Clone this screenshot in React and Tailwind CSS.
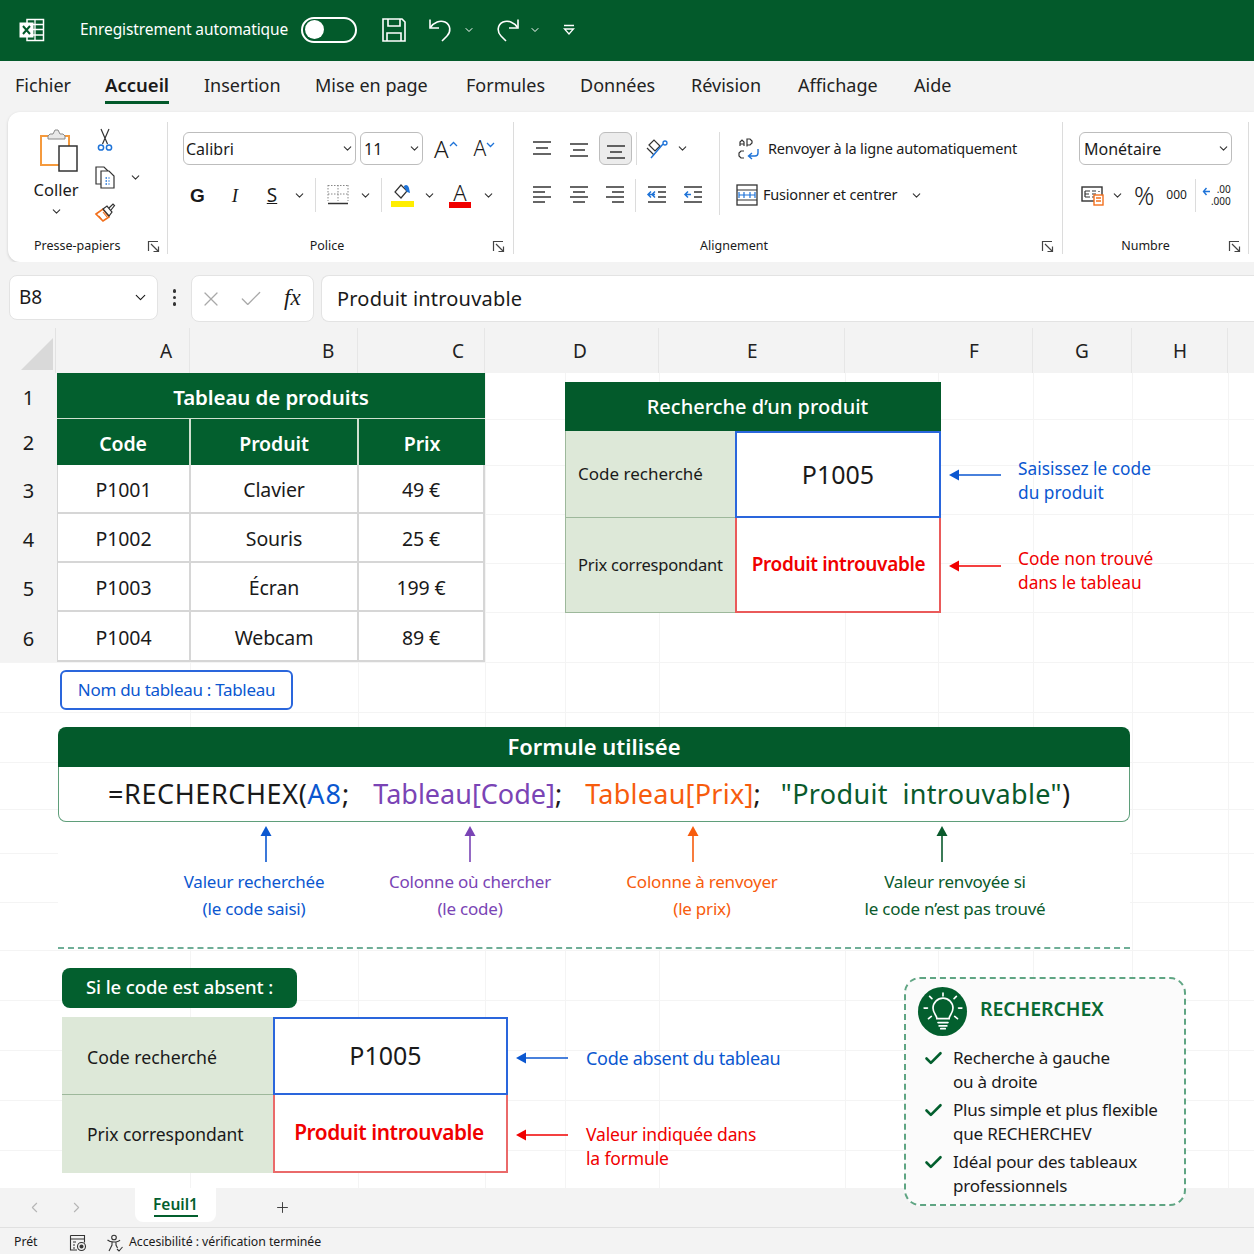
import React from "react";
import { ChevronDown, ChevronLeft, ChevronRight, Plus, X, Check } from "lucide-react";

const Chev = ({ className = "" }) => <ChevronDown size={13} strokeWidth={2} className={"text-[#333] " + className} />;

function Launcher() {
  return (
    <svg width="13" height="13" viewBox="0 0 13 13" fill="none" stroke="#444" strokeWidth="1.2">
      <path d="M1.5 11V1.5H11" />
      <path d="M4 4l7.5 7.5M11.5 6.5v5h-5" />
    </svg>
  );
}

function Lines({ rows, extra }) {
  return (
    <svg width="22" height="22" viewBox="0 0 22 22" fill="none" stroke="#333" strokeWidth="1.5">
      {rows.map((r, i) => <line key={i} x1={r[0]} x2={r[1]} y1={r[2]} y2={r[2]} />)}
      {extra}
    </svg>
  );
}

function ExcelLogo() {
  return (
    <svg width="28" height="26" viewBox="0 0 28 26" fill="none">
      <path d="M9 2.5h16.5v21H9z" stroke="#fff" strokeWidth="1.5" />
      <path d="M9 7.5h16.5M9 12.5h16.5M9 18h16.5M17 2.5v21" stroke="#fff" strokeWidth="1.3" />
      <rect x="1.5" y="5.5" width="14" height="15" fill="#fff" />
      <path d="M5 9l7 8M12 9l-7 8" stroke="#035a2b" strokeWidth="2" />
    </svg>
  );
}

function Clipboard() {
  return (
    <svg width="40" height="44" viewBox="0 0 40 44" fill="none">
      <path d="M2 7h28v29H2z" stroke="#f59a3d" strokeWidth="2" />
      <path d="M9 7l2-2h3l2-4h3l2 4h3l2 2v3H9z" fill="#e8e8e8" stroke="#888" strokeWidth="1" />
      <rect x="20" y="17" width="18" height="25" fill="#fff" stroke="#333" strokeWidth="1.5" />
    </svg>
  );
}

function ScissorsIcon() {
  return (
    <svg width="16" height="24" viewBox="0 0 16 24" fill="none">
      <path d="M4 1l6.5 15M12 1L5.5 16" stroke="#333" strokeWidth="1.2" />
      <circle cx="4" cy="19.5" r="2.6" stroke="#1e73d8" strokeWidth="1.5" />
      <circle cx="12" cy="19.5" r="2.6" stroke="#1e73d8" strokeWidth="1.5" />
    </svg>
  );
}

function CopyIcon() {
  return (
    <svg width="22" height="24" viewBox="0 0 22 24" fill="none" stroke="#333" strokeWidth="1.2">
      <path d="M8 19H2V2h8l4 4" />
      <path d="M7 6h8l5 5v12H7z" fill="#fff" />
      <path d="M11.5 13h4M11.5 16h4M11.5 19h4" stroke="#1e73d8" strokeDasharray="1.5 1.5" strokeWidth="1.5" />
    </svg>
  );
}

function BrushIcon() {
  return (
    <svg width="22" height="22" viewBox="0 0 22 22" fill="none">
      <path d="M2 13l7-5 6 8-6 4z" stroke="#f2701d" strokeWidth="1.6" />
      <path d="M5 15l3 4M9 11l4 5" stroke="#f2701d" strokeWidth="1.2" />
      <path d="M9 8l4-3 5 6-3 4z" fill="#fff" stroke="#333" strokeWidth="1.2" />
      <path d="M15 7l4-4 1.5 1.5-3.5 4.5" stroke="#333" strokeWidth="1.2" />
    </svg>
  );
}

function BordersIcon() {
  return (
    <svg width="22" height="22" viewBox="0 0 22 22" fill="none">
      <path d="M1 1.5h20M1 10h20M11 1v16M1 1v16M21 1v16" stroke="#888" strokeWidth="1" strokeDasharray="1.5 1.5" />
      <path d="M1 19.5h20" stroke="#333" strokeWidth="1.5" />
    </svg>
  );
}

function FillIcon() {
  return (
    <div className="flex flex-col items-center">
      <svg width="22" height="18" viewBox="0 0 22 18" fill="none">
        <path d="M9 2L3 9l6 6 6-7z" fill="#fff" stroke="#333" strokeWidth="1.2" />
        <path d="M12 3c2-2 4-1 5 2l1 5-3-1-3-5" fill="#1e73d8" />
      </svg>
      <div className="h-[6px] w-[23px] bg-[#ffee00]" />
    </div>
  );
}

function OrientIcon() {
  return (
    <svg width="24" height="24" viewBox="0 0 24 24" fill="none">
      <path d="M4 8l5-5 6 6-5 5zM2 11l7 7" stroke="#333" strokeWidth="1.2" />
      <path d="M6 21L18 7" stroke="#1e73d8" strokeWidth="1.4" />
      <circle cx="20" cy="6" r="2" stroke="#1e73d8" strokeWidth="1.3" />
    </svg>
  );
}

function WrapIcon() {
  return (
    <svg width="22" height="24" viewBox="0 0 22 24" fill="none">
      <path d="M3 9V5l2-2 2 2v4M3 7h4M10 1.5v8M10 2h3l2 2v2l-2 2h-3M7 14H4l-2 2v3l2 2h3" stroke="#333" strokeWidth="1.2" />
      <path d="M21 12v4a3 3 0 0 1-3 3h-6M15 16l-3.5 3 3.5 3" stroke="#1e73d8" strokeWidth="1.4" />
    </svg>
  );
}

function MergeIcon() {
  return (
    <svg width="22" height="22" viewBox="0 0 22 22" fill="none">
      <rect x="1" y="1" width="20" height="20" stroke="#333" strokeWidth="1.3" />
      <path d="M1 6h20M1 16h20" stroke="#333" strokeWidth="1.2" />
      <path d="M3 11h16M3 8v6M19 8v6M8 8v6M14 8v6" stroke="#1e73d8" strokeWidth="1.2" />
    </svg>
  );
}

function CurrencyIcon() {
  return (
    <svg width="24" height="22" viewBox="0 0 24 22" fill="none">
      <rect x="1" y="3" width="20" height="14" stroke="#333" strokeWidth="1.4" />
      <path d="M4 7h5M4 10h4M4 13h5M4 7v6M11 7h4M11 10h4M11 13h4M18 7v1" stroke="#333" strokeWidth="1.2" />
      <rect x="13" y="11" width="9" height="10" fill="#fff" stroke="#f2701d" strokeWidth="1.4" />
      <path d="M15 14h5M15 17h5" stroke="#f2701d" strokeWidth="1.3" />
    </svg>
  );
}

function LeftArrow({ color, w }) {
  return (
    <svg width={w} height="12" viewBox={`0 0 ${w} 12`} className="shrink-0">
      <path d="M0 6l10-5.5v11z" fill={color} />
      <line x1="8" y1="6" x2={w} y2="6" stroke={color} strokeWidth="1.6" />
    </svg>
  );
}

function UpArrow({ color, className = "" }) {
  return (
    <svg width="12" height="36" viewBox="0 0 12 36" className={"shrink-0 " + className}>
      <path d="M6 0l5.5 10H.5z" fill={color} />
      <line x1="6" y1="8" x2="6" y2="36" stroke={color} strokeWidth="1.6" />
    </svg>
  );
}

function Bulb() {
  return (
    <svg width="40" height="40" viewBox="0 0 36 36" fill="none" stroke="#fff" strokeWidth="1.5" strokeLinecap="round">
      <path d="M12.5 24c0-3-3.5-4.5-3.5-9.5a9 9 0 0 1 18 0c0 5-3.5 6.5-3.5 9.5z" />
      <path d="M13.5 27.5h9M14.5 30.5h7M16 33h4" />
      <path d="M18 1v2.5M6 4l2 2M30 4l-2 2M1 14.5h3M32 14.5h3M5 24l2.5-2M31 24l-2.5-2" />
    </svg>
  );
}

const gridX = [190, 358, 485, 565, 659, 845, 938, 1033, 1132, 1228];
const gridY = [46, 92, 141, 190, 239, 289, 339, 389, 436, 480, 529, 577, 627, 677, 727, 777];

const products = [
  ["3", "P1001", "Clavier", "49 €", "h-[49px]"],
  ["4", "P1002", "Souris", "25 €", "h-[49px]"],
  ["5", "P1003", "Écran", "199 €", "h-[49px]"],
  ["6", "P1004", "Webcam", "89 €", "h-[50px]"],
];

const bullets = [
  ["Recherche à gauche", "ou à droite"],
  ["Plus simple et plus flexible", "que RECHERCHEV"],
  ["Idéal pour des tableaux", "professionnels"],
];

export default function App() {
  return (
    <div className="w-[1254px] h-[1254px] overflow-hidden flex flex-col bg-white text-[#1a1a1a] font-['Noto_Sans','Open_Sans',sans-serif]">
      {/* Title bar */}
      <div className="h-[61px] shrink-0 bg-[#035a2b] flex items-center pb-[2px] text-white">
        <div className="ml-[18px] w-[28px]"><ExcelLogo /></div>
        <span className="ml-[34px] text-[15.5px] tracking-[-0.1px] w-[221px] whitespace-nowrap">Enregistrement automatique</span>
        <div className="w-[56px] h-[26px] rounded-full border-2 border-white flex items-center pl-[2px]">
          <div className="w-[19px] h-[19px] rounded-full bg-white" />
        </div>
        <svg className="ml-[24px]" width="26" height="26" viewBox="0 0 26 26" fill="none" stroke="#fff" strokeWidth="1.6">
          <path d="M2 2h19l3 3v19H2z" />
          <path d="M7 2v7h12V2M6 24v-8h14v8" />
        </svg>
        <svg className="ml-[21px]" width="26" height="26" viewBox="0 0 26 26" fill="none" stroke="#fff" strokeWidth="1.6">
          <path d="M2 2.5v8.5h9" />
          <path d="M2.5 10.5C6 5 12 3 17 5c6 3 6 10 2 14l-5 5" />
        </svg>
        <ChevronDown size={12} className="ml-[9px]" />
        <svg className="ml-[19px]" width="26" height="26" viewBox="0 0 26 26" fill="none" stroke="#fff" strokeWidth="1.6">
          <path d="M24 2.5v8.5h-9" />
          <path d="M23.5 10.5C20 5 14 3 9 5c-6 3-6 10-2 14l5 5" />
        </svg>
        <ChevronDown size={12} className="ml-[9px]" />
        <svg className="ml-[22px]" width="12" height="12" viewBox="0 0 12 12" fill="none" stroke="#fff" strokeWidth="1.3">
          <path d="M1 1.5h10M1.5 5h9L6 10z" />
        </svg>
      </div>

      {/* Tabs */}
      <div className="h-[51px] shrink-0 bg-[#f3f3f3] flex items-start pt-[11px] pl-[15px] text-[18px] leading-[26px] text-[#222]">
        <span className="w-[90px]">Fichier</span>
        <div className="w-[99px] flex flex-col items-start">
          <span className="font-semibold w-[64px] whitespace-nowrap text-[#1a1a1a] text-[18.5px]">Accueil</span>
          <div className="h-[3px] w-[64px] mt-[3px] bg-[#035a2b]" />
        </div>
        <span className="w-[111px]">Insertion</span>
        <span className="w-[151px]">Mise en page</span>
        <span className="w-[114px]">Formules</span>
        <span className="w-[111px]">Données</span>
        <span className="w-[107px]">Révision</span>
        <span className="w-[116px]">Affichage</span>
        <span>Aide</span>
      </div>

      {/* Ribbon */}
      <div className="h-[150px] shrink-0 bg-[#f3f3f3] pl-[8px]">
        <div className="h-[150px] bg-white rounded-l-xl shadow-[0_1px_3px_rgba(0,0,0,0.16)] flex pt-[10px] pb-[8px]">
          {/* Presse-papiers */}
          <div className="w-[160px] shrink-0 border-r border-[#dcdcdc] flex flex-col">
            <div className="flex h-[116px]">
              <div className="w-[70px] flex flex-col items-center pt-[7px] pl-[22px] ml-[2px]">
                <div className="ml-[5px]"><Clipboard /></div>
                <span className="text-[16.5px] leading-[22px] mt-[6px]">Coller</span>
                <Chev className="mt-[4px]" />
              </div>
              <div className="w-[25px] ml-[12px] flex flex-col items-center pt-[6px]">
                <ScissorsIcon />
                <div className="mt-[13px]"><CopyIcon /></div>
                <div className="mt-[12px]"><BrushIcon /></div>
              </div>
              <Chev className="ml-[12px] mt-[49px]" />
            </div>
            <div className="flex items-center h-[16px] pl-[26px]">
              <span className="text-[12.5px] w-[113px] whitespace-nowrap">Presse-papiers</span>
              <Launcher />
            </div>
          </div>

          {/* Police */}
          <div className="w-[346px] shrink-0 border-r border-[#dcdcdc] flex flex-col">
            <div className="h-[116px] pl-[15px] pt-[10px]">
              <div className="flex items-center h-[33px]">
                <div className="w-[173px] h-[33px] border border-[#bdbdbd] rounded-md flex items-center justify-between pl-[2px] pr-[1px] text-[16px]">
                  <span>Calibri</span><Chev />
                </div>
                <div className="w-[63px] h-[33px] ml-[4px] border border-[#bdbdbd] rounded-md flex items-center justify-between pl-[3px] pr-[1px] text-[16px]">
                  <span>11</span><Chev />
                </div>
                <span className="ml-[11px] text-[24px] leading-none font-light">A</span>
                <svg width="9" height="7" viewBox="0 0 9 7" fill="none" stroke="#1e73d8" strokeWidth="1.3" className="mb-[9px]"><path d="M1 5l3.5-3.5L8 5" /></svg>
                <span className="ml-[16px] text-[21px] leading-none font-light">A</span>
                <svg width="9" height="7" viewBox="0 0 9 7" fill="none" stroke="#1e73d8" strokeWidth="1.3" className="mb-[9px]"><path d="M1 2l3.5 3.5L8 2" /></svg>
              </div>
              <div className="flex items-center h-[34px] mt-[13px] pl-[7px]">
                <span className="w-[14px] text-[19px] font-bold font-['Liberation_Sans',sans-serif] leading-none">G</span>
                <span className="w-[14px] ml-[24px] text-[19px] italic font-light font-['Liberation_Serif',serif] text-center leading-none">I</span>
                <span className="w-[14px] ml-[23px] text-[19px] underline text-center leading-none">S</span>
                <Chev className="ml-[14px]" />
                <div className="w-px h-[34px] bg-[#dcdcdc] ml-[9px]" />
                <div className="ml-[11px]"><BordersIcon /></div>
                <Chev className="ml-[10px]" />
                <div className="w-px h-[34px] bg-[#dcdcdc] ml-[9px]" />
                <div className="ml-[9px]"><FillIcon /></div>
                <Chev className="ml-[9px]" />
                <div className="ml-[13px] flex flex-col items-center w-[22px]">
                  <span className="text-[22px] leading-[19px] font-light">A</span>
                  <div className="h-[6px] w-[22px] bg-[#f00000]" />
                </div>
                <Chev className="ml-[11px]" />
              </div>
            </div>
            <div className="flex items-center h-[16px]">
              <span className="text-[12.5px] w-[318px] text-center">Police</span>
              <span className="ml-[6px]"><Launcher /></span>
            </div>
          </div>

          {/* Alignement */}
          <div className="w-[549px] shrink-0 border-r border-[#dcdcdc] flex flex-col">
            <div className="h-[116px] flex pt-[10px]">
              <div className="flex flex-col pl-[17px] w-[205px] shrink-0">
                <div className="flex items-center h-[33px]">
                  <Lines rows={[[2, 20, 4], [5, 17, 10], [2, 20, 16]]} />
                  <div className="ml-[15px]"><Lines rows={[[2, 20, 6], [5, 17, 12], [2, 20, 18]]} /></div>
                  <div className="ml-[9px] w-[33px] h-[33px] bg-[#ececec] border border-[#bdbdbd] rounded-md flex items-center justify-center">
                    <Lines rows={[[2, 20, 8], [5, 17, 14], [2, 20, 20]]} />
                  </div>
                  <div className="w-px h-[33px] bg-[#dcdcdc] ml-[4px]" />
                  <div className="ml-[8px]"><OrientIcon /></div>
                  <Chev className="ml-[7px]" />
                </div>
                <div className="flex items-center h-[34px] mt-[13px]">
                  <Lines rows={[[2, 20, 3], [2, 14, 8], [2, 20, 13], [2, 14, 18]]} />
                  <div className="ml-[15px]"><Lines rows={[[2, 20, 3], [5, 17, 8], [2, 20, 13], [5, 17, 18]]} /></div>
                  <div className="ml-[14px]"><Lines rows={[[2, 20, 3], [8, 20, 8], [2, 20, 13], [8, 20, 18]]} /></div>
                  <div className="w-px h-[33px] bg-[#dcdcdc] ml-[9px]" />
                  <div className="ml-[10px]"><Lines rows={[[2, 20, 3], [12, 20, 8], [12, 20, 13], [2, 20, 18]]} extra={<path d="M9 10.5H2M5 7.5l-3 3 3 3M9 7.5l-3 3 3 3" stroke="#1e73d8" />} /></div>
                  <div className="ml-[14px]"><Lines rows={[[2, 20, 3], [12, 20, 8], [12, 20, 13], [2, 20, 18]]} extra={<path d="M9 10.5H3M6 7.5l-3 3 3 3" stroke="#1e73d8" />} /></div>
                </div>
              </div>
              <div className="w-px h-[83px] bg-[#dcdcdc]" />
              <div className="flex flex-col text-[14.5px] tracking-[-0.2px]">
                <div className="flex items-center h-[33px] pl-[17px]">
                  <WrapIcon />
                  <span className="ml-[9px] whitespace-nowrap">Renvoyer à la ligne automatiquement</span>
                </div>
                <div className="flex items-center h-[34px] mt-[13px] pl-[16px]">
                  <MergeIcon />
                  <span className="ml-[5px] whitespace-nowrap">Fusionner et centrer</span>
                  <Chev className="ml-[13px]" />
                </div>
              </div>
            </div>
            <div className="flex items-center h-[16px]">
              <span className="text-[12.5px] w-[441px] text-right pr-[187px] whitespace-nowrap">Alignement</span>
              <span className="ml-[86px]"><Launcher /></span>
            </div>
          </div>

          {/* Nombre */}
          <div className="w-[186px] shrink-0 border-r border-[#dcdcdc] flex flex-col">
            <div className="h-[116px] pl-[16px] pt-[10px]">
              <div className="w-[153px] h-[33px] border border-[#bdbdbd] rounded-md flex items-center justify-between pl-[4px] pr-[1px] text-[16px]">
                <span>Monétaire</span><Chev />
              </div>
              <div className="flex items-center h-[34px] mt-[13px]">
                <div className="ml-[2px]"><CurrencyIcon /></div>
                <Chev className="ml-[6px]" />
                <span className="ml-[10px] text-[25px] leading-none font-light">%</span>
                <span className="ml-[12px] text-[12px] leading-none">000</span>
                <div className="w-px h-[33px] bg-[#dcdcdc] ml-[8px]" />
                <div className="ml-[6px] flex items-center">
                  <svg width="9" height="11" viewBox="0 0 9 11" fill="none" stroke="#1e73d8" strokeWidth="1.4" className="mb-[8px]"><path d="M8 5.5H1.5M4.5 2L1.5 5.5 4.5 9" /></svg>
                  <span className="flex flex-col text-[10px] leading-[12px] text-right">
                    <span>.00</span><span>.000</span>
                  </span>
                </div>
              </div>
            </div>
            <div className="flex items-center h-[16px]">
              <span className="text-[12.5px] w-[165px] text-center">Numbre</span>
              <span><Launcher /></span>
            </div>
          </div>
        </div>
      </div>

      {/* Formula bar */}
      <div className="h-[66px] shrink-0 bg-[#f3f3f3] pt-[13px] pb-[6px] flex items-start">
        <div className="ml-[9px] w-[149px] h-[45px] bg-white rounded-lg border border-[#e3e3e3] flex items-center justify-between pl-[9px] pr-[8px] text-[19px]">
          <span>B8</span><ChevronDown size={17} strokeWidth={1.6} />
        </div>
        <div className="w-[33px] flex flex-col items-center justify-center gap-[3px] h-[45px]">
          <div className="w-[3.5px] h-[3.5px] rounded-full bg-[#333]" />
          <div className="w-[3.5px] h-[3.5px] rounded-full bg-[#333]" />
          <div className="w-[3.5px] h-[3.5px] rounded-full bg-[#333]" />
        </div>
        <div className="w-[123px] h-[47px] bg-white rounded-lg border border-[#e3e3e3] flex items-center pl-[7px]">
          <X size={24} strokeWidth={1.2} className="text-[#a9a9a9]" />
          <Check size={26} strokeWidth={1.2} className="ml-[15px] text-[#a9a9a9]" />
          <span className="ml-[20px] text-[23px] italic font-['Liberation_Serif',serif]">fx</span>
        </div>
        <div className="ml-[7px] flex-1 h-[47px] bg-white rounded-l-lg border border-[#e3e3e3] border-r-0 flex items-center pl-[15px] text-[20px] tracking-[0.2px]">
          Produit introuvable
        </div>
      </div>

      {/* Column headers */}
      <div className="h-[45px] shrink-0 bg-[#f3f3f3] flex text-[19px] leading-[47px] text-[#222]">
        <div className="w-[56px] shrink-0 flex items-end justify-end pr-[2px] pb-[3px] border-r border-[#e2e2e2]">
          <div className="w-[32px] h-[32px] bg-[#d9d9d9] [clip-path:polygon(100%_0,100%_100%,0_100%)]" />
        </div>
        <div className="w-[134px] pl-[104px] border-r border-[#e6e6e6]">A</div>
        <div className="w-[168px] pl-[132px] border-r border-[#e6e6e6]">B</div>
        <div className="w-[127px] pl-[94px] border-r border-[#e6e6e6]">C</div>
        <div className="w-[174px] pl-[88px] border-r border-[#e6e6e6]">D</div>
        <div className="w-[186px] pl-[88px] border-r border-[#e6e6e6]">E</div>
        <div className="w-[188px] pl-[124px] border-r border-[#e6e6e6]">F</div>
        <div className="w-[99px] pl-[42px] border-r border-[#e6e6e6]">G</div>
        <div className="w-[96px] pl-[41px] border-r border-[#e6e6e6]">H</div>
      </div>

      {/* Sheet */}
      <div className="h-[815px] shrink-0 relative">
        <div className="absolute inset-0 pointer-events-none">
          {gridX.map((x) => <div key={x} className="absolute top-0 bottom-0 w-px bg-[#f4f4f4]" style={{ left: x }} />)}
          {gridY.map((y) => <div key={y} className="absolute left-0 right-0 h-px bg-[#f4f4f4]" style={{ top: y }} />)}
        </div>

        <div className="relative flex items-start h-[289px]">
          {/* Products */}
          <div className="w-[485px] shrink-0 grid grid-cols-[57px_134px_168px_126px] text-[19.5px] tracking-[-0.1px]">
            <div className="h-[46px] bg-[#f3f3f3] flex items-center justify-center pt-[4px] text-[20px]">1</div>
            <div className="col-span-3 h-[46px] bg-[#035f2e] text-white font-semibold text-[20.5px] flex items-center justify-center pt-[4px] border-b border-[#cfe0cf]">Tableau de produits</div>
            <div className="h-[46px] bg-[#f3f3f3] flex items-center justify-center pt-[2px] text-[20px]">2</div>
            <div className="h-[46px] bg-[#035f2e] text-white font-semibold flex items-center justify-center pt-[3px] border-r-2 border-[#cfe0cf]">Code</div>
            <div className="h-[46px] bg-[#035f2e] text-white font-semibold flex items-center justify-center pt-[3px] border-r-2 border-[#cfe0cf]">Produit</div>
            <div className="h-[46px] bg-[#035f2e] text-white font-semibold flex items-center justify-center pt-[3px]">Prix</div>
            {products.map(([n, c, p, price, h]) => (
              <React.Fragment key={n}>
                <div className={h + " bg-[#f3f3f3] flex items-center justify-center pt-[3px] text-[20px]"}>{n}</div>
                <div className={h + " bg-white flex items-center justify-center pt-[3px] border-b-2 border-l border-r-2 border-[#d6d6d6]"}>{c}</div>
                <div className={h + " bg-white flex items-center justify-center pt-[3px] border-b-2 border-r-2 border-[#d6d6d6]"}>{p}</div>
                <div className={h + " bg-white flex items-center justify-center pt-[3px] border-b-2 border-r-2 border-[#d6d6d6]"}>{price}</div>
              </React.Fragment>
            ))}
          </div>

          {/* Search panel */}
          <div className="ml-[80px] mt-[9px] w-[376px] shrink-0">
            <div className="h-[49px] bg-[#035a2b] text-white text-[20px] font-medium flex items-center justify-center pl-[9px]">Recherche d’un produit</div>
            <div className="flex h-[87px]">
              <div className="w-[170px] shrink-0 bg-[#dde8d8] border-l border-b border-[#9db89b] flex items-center pl-[12px] text-[17px]">Code recherché</div>
              <div className="w-[206px] shrink-0 bg-white border-2 border-[#2a66dc] flex items-center justify-center text-[25px]">P1005</div>
            </div>
            <div className="flex h-[95px]">
              <div className="w-[170px] shrink-0 bg-[#dde8d8] border-l border-b border-[#9db89b] flex items-center pl-[12px] text-[16.5px] tracking-[-0.2px] whitespace-nowrap">Prix correspondant</div>
              <div className="w-[206px] shrink-0 bg-white border-2 border-t-0 border-[#ea5a5a] flex items-center justify-center pl-[1px] text-[19px] tracking-[-0.35px] font-semibold text-[#f00000] whitespace-nowrap">Produit introuvable</div>
            </div>
          </div>

          {/* Panel annotations */}
          <div className="mt-[9px] pt-[49px] shrink-0">
            <div className="flex items-center h-[87px] pl-[8px]">
              <LeftArrow color="#0b57d0" w={52} />
              <div className="ml-[17px] mt-[13px] text-[17.3px] leading-[24.5px] text-[#0b57d0]">Saisissez le code<br />du produit</div>
            </div>
            <div className="flex items-center h-[95px] pl-[8px]">
              <LeftArrow color="#f00000" w={52} />
              <div className="ml-[17px] mt-[11px] text-[17.3px] leading-[24.5px] text-[#f00000]">Code non trouvé<br />dans le tableau</div>
            </div>
          </div>
        </div>

        {/* Table name */}
        <div className="relative ml-[60px] mt-[8px] w-[233px] h-[40px] bg-white rounded-md border-2 border-[#2a66dc] flex items-center justify-center text-[17px] tracking-[-0.3px] text-[#0b57d0]">Nom du tableau : Tableau</div>

        {/* Formula section */}
        <div className="relative ml-[58px] mt-[17px] w-[1072px] h-[222px] bg-white border-b-2 border-dashed border-[#6fae97]">
          <div className="h-[40px] bg-[#035a2b] rounded-t-lg text-white text-[22px] font-semibold flex items-center justify-center pb-[2px]">Formule utilisée</div>
          <div className="h-[55px] bg-white border border-t-0 border-[#5f9e7a] rounded-b-lg flex items-center pl-[49px] text-[27px] whitespace-pre">
            <span className="tracking-[0.6px]">=RECHERCHEX(</span>
            <span className="text-[#0b57d0] tracking-[1px]">A8</span>
            <span>;</span>
            <span className="ml-[24px] text-[#7a44b5]">Tableau[Code]</span>
            <span>;</span>
            <span className="ml-[23px] text-[#f75c0d] tracking-[0.25px]">Tableau[Prix]</span>
            <span>;</span>
            <span className="ml-[20px] text-[#0a5a2c] tracking-[0.33px]">"Produit  introuvable"</span>
            <span>)</span>
          </div>
          <div className="flex pl-[86px] pt-[4px] text-[17px] tracking-[-0.22px] leading-[26.5px] text-center">
            <div className="w-[220px] flex flex-col items-center text-[#0b57d0]">
              <UpArrow color="#0b57d0" className="ml-[24px]" />
              <div className="mt-[7px]">Valeur recherchée<br />(le code saisi)</div>
            </div>
            <div className="ml-[6px] w-[200px] flex flex-col items-center text-[#7a44b5]">
              <UpArrow color="#7a44b5" />
              <div className="mt-[7px]">Colonne où chercher<br />(le code)</div>
            </div>
            <div className="ml-[32px] w-[200px] flex flex-col items-center text-[#f75c0d]">
              <UpArrow color="#f75c0d" className="mr-[18px]" />
              <div className="mt-[7px]">Colonne à renvoyer<br />(le prix)</div>
            </div>
            <div className="ml-[33px] w-[240px] flex flex-col items-center text-[#0a5a2c]">
              <UpArrow color="#0a5a2c" className="mr-[26px]" />
              <div className="mt-[7px]">Valeur renvoyée si<br />le code n’est pas trouvé</div>
            </div>
          </div>
        </div>

        {/* Bottom */}
        <div className="relative flex items-start">
          <div className="ml-[62px] w-[842px] shrink-0 pt-[19px]">
            <div className="w-[235px] h-[40px] bg-[#035f2e] rounded-lg text-white text-[18.5px] tracking-[-0.1px] font-medium flex items-center pl-[24px] pb-[2px]">Si le code est absent :</div>
            <div className="flex h-[78px] mt-[9px]">
              <div className="w-[211px] shrink-0 bg-[#dde8d8] border-b border-[#9db89b] flex items-center pl-[25px] pt-[3px] text-[17.7px]">Code recherché</div>
              <div className="w-[235px] shrink-0 bg-white border-2 border-[#2a66dc] flex items-center justify-center pr-[10px] text-[25px]">P1005</div>
              <div className="ml-[8px] flex items-center pt-[4px]">
                <LeftArrow color="#0b57d0" w={52} />
                <span className="ml-[18px] text-[18px] tracking-[-0.3px] text-[#0b57d0] whitespace-nowrap">Code absent du tableau</span>
              </div>
            </div>
            <div className="flex h-[78px]">
              <div className="w-[211px] shrink-0 bg-[#dde8d8] flex items-center pl-[25px] pt-[1px] text-[17.5px] tracking-[-0.05px] whitespace-nowrap">Prix correspondant</div>
              <div className="w-[235px] shrink-0 bg-white border-2 border-t-0 border-[#ea6a6a] flex items-center justify-center pr-[3px] text-[20.8px] tracking-[-0.4px] font-semibold text-[#f00000] whitespace-nowrap">Produit introuvable</div>
              <div className="ml-[8px] flex items-start pt-[34px]">
                <LeftArrow color="#f00000" w={52} />
                <div className="ml-[18px] -mt-[7px] text-[17.5px] tracking-[-0.15px] leading-[24px] text-[#f00000] whitespace-nowrap">Valeur indiquée dans<br />la formule</div>
              </div>
            </div>
          </div>

          {/* Card */}
          <div className="relative z-10 mt-[28px] w-[282px] h-[229px] shrink-0 bg-[#fbfbfb] rounded-2xl border-2 border-dashed border-[#5fa583] pl-[12px] pt-[8px]">
            <div className="flex items-center">
              <div className="w-[49px] h-[49px] rounded-full bg-[#035f2e] flex items-center justify-center"><Bulb /></div>
              <span className="ml-[13px] pb-[6px] text-[19.5px] font-semibold text-[#0a6a34] tracking-[-0.1px]">RECHERCHEX</span>
            </div>
            <div className="mt-[10px] pl-[5px] flex flex-col gap-[4px] text-[17px] tracking-[-0.2px] leading-[24px]">
              {bullets.map(([a, b]) => (
                <div key={a} className="flex items-start">
                  <Check size={21} strokeWidth={3} className="text-[#035f2e] mt-[2px] shrink-0" />
                  <div className="ml-[9px] whitespace-nowrap">{a}<br />{b}</div>
                </div>
              ))}
            </div>
          </div>
        </div>
      </div>

      {/* Sheet tabs */}
      <div className="h-[40px] shrink-0 bg-[#f3f3f3] flex items-start border-b border-[#e0e0e0]">
        <div className="w-[135px] h-[39px] flex items-center pl-[26px] text-[#b5b5b5]">
          <ChevronLeft size={17} strokeWidth={1.5} />
          <ChevronRight size={17} strokeWidth={1.5} className="ml-[25px]" />
        </div>
        <div className="w-[81px] h-[34px] bg-white rounded-b-lg flex flex-col items-center pt-[6px]">
          <span className="text-[15.5px] leading-[20px] font-semibold text-[#035f2e]">Feuil1</span>
          <div className="w-[44px] h-[2px] bg-[#035f2e] mt-[1px]" />
        </div>
        <div className="h-[39px] flex items-center ml-[58px]"><Plus size={17} strokeWidth={1.3} className="text-[#333]" /></div>
      </div>

      {/* Status */}
      <div className="h-[26px] shrink-0 bg-[#f3f3f3] flex items-center pt-[3px] text-[12.3px] tracking-[-0.05px] pl-[14px]">
        <span className="w-[55px]">Prét</span>
        <svg width="18" height="18" viewBox="0 0 18 18" fill="none" stroke="#333" strokeWidth="1.1">
          <path d="M1.5 1.5h14v7M8 16H1.5v-14.5M1.5 5h14M4 8h3M4 11h2M4 14h2" />
          <circle cx="12.5" cy="12.5" r="4" />
          <circle cx="12.5" cy="12.5" r="1.5" fill="#333" />
        </svg>
        <svg className="ml-[19px]" width="18" height="18" viewBox="0 0 18 18" fill="none" stroke="#333" strokeWidth="1.1">
          <circle cx="8" cy="3.5" r="2.3" />
          <path d="M1.5 6c2 2 4 2 6.5 2s4.5 0 6-2M6 8v3l-3 6M10 8v3l1.5 3M11 15l2 2 3.5-4" />
        </svg>
        <span className="ml-[5px] whitespace-nowrap">Accesibilité : vérification terminée</span>
      </div>
    </div>
  );
}
